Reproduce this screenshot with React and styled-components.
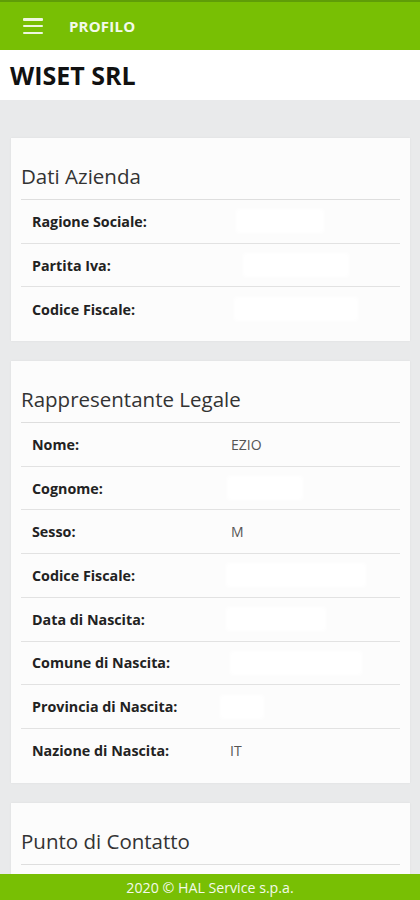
import React from "react";
import styled, { createGlobalStyle } from "styled-components";

const Global = createGlobalStyle`
  html, body { margin: 0; padding: 0; }
  body {
    background: #e9eaeb;
    font-family: "Open Sans", "Noto Sans", Arial, sans-serif;
    color: #222;
  }
`;

const Page = styled.div`
  height: 900px;
  overflow: hidden;
  background: #e9eaeb;
`;

const TopBar = styled.header`
  height: 50px;
  background: #78bf04;
  border-top: 2px solid #5f9d08;
  box-sizing: border-box;
  display: flex;
  align-items: center;
  padding-left: 23px;
  gap: 26px;
`;

const Burger = styled.button`
  border: 0;
  background: none;
  padding: 0;
  width: 20px;
  height: 16px;
  display: flex;
  flex-direction: column;
  justify-content: space-between;
  span {
    display: block;
    height: 2.5px;
    background: #eef7e0;
    border-radius: 1px;
  }
`;

const BarTitle = styled.h1`
  margin: 0;
  font-size: 15px;
  font-weight: 700;
  color: #f3faea;
  letter-spacing: 0.2px;
`;

const CompanyBand = styled.div`
  height: 50px;
  background: #fff;
  display: flex;
  align-items: center;
  padding-left: 10px;
  font-size: 25px;
  font-weight: 700;
  color: #111;
  margin-bottom: 38px;
`;

const Cards = styled.div`
  display: flex;
  flex-direction: column;
  gap: 20px;
  padding: 0 10px 0 11px;
`;

const Card = styled.section`
  background: #fcfcfc;
  box-shadow: 0 0 2px rgba(0, 0, 0, 0.06);
  padding: 19px 10px ${(p) => (p.$tail ? 40 : 10)}px;
`;

const CardTitle = styled.h2`
  margin: 0;
  line-height: 38px;
  padding-bottom: 4px;
  font-size: 20.5px;
  font-weight: 400;
  color: #333;
  border-bottom: 1px solid #dedede;
`;

const Row = styled.div`
  display: grid;
  grid-template-columns: 210px 1fr;
  align-items: center;
  height: 43.7px;
  box-sizing: border-box;
  border-bottom: 1px solid #e2e2e2;
  &:last-child { border-bottom: 0; }
`;

const Label = styled.span`
  padding-left: 11px;
  font-size: 14.3px;
  font-weight: 700;
  color: #222;
`;

const Value = styled.span`
  font-size: 14px;
  color: #555;
  margin-left: ${(p) => p.$off || 0}px;
`;

const Redacted = styled.span`
  display: block;
  height: 20px;
  width: ${(p) => p.$w}px;
  margin-left: ${(p) => p.$off || 0}px;
  background: #fff;
  box-shadow: 0 0 4px 2px #fff;
`;

const Footer = styled.footer`
  position: fixed;
  left: 0;
  right: 0;
  bottom: 0;
  height: 26px;
  background: #78bf04;
  color: #f3faea;
  font-size: 14.2px;
  display: flex;
  align-items: center;
  justify-content: center;
`;

const azienda = [
  { l: "Ragione Sociale:", w: 84, off: 7 },
  { l: "Partita Iva:", w: 102, off: 14 },
  { l: "Codice Fiscale:", w: 120, off: 5 },
];

const legale = [
  { l: "Nome:", v: "EZIO" },
  { l: "Cognome:", w: 72, off: -2 },
  { l: "Sesso:", v: "M" },
  { l: "Codice Fiscale:", w: 136, off: -3 },
  { l: "Data di Nascita:", w: 96, off: -3 },
  { l: "Comune di Nascita:", w: 128, off: 1 },
  { l: "Provincia di Nascita:", w: 40, off: -9 },
  { l: "Nazione di Nascita:", v: "IT", off: -1 },
];

function Rows({ items }) {
  return items.map((r) => (
    <Row key={r.l}>
      <Label>{r.l}</Label>
      {r.v ? <Value $off={r.off}>{r.v}</Value> : <Redacted $w={r.w} $off={r.off} />}
    </Row>
  ));
}

export default function App() {
  return (
    <Page>
      <Global />
      <TopBar>
        <Burger aria-label="menu">
          <span />
          <span />
          <span />
        </Burger>
        <BarTitle>PROFILO</BarTitle>
      </TopBar>
      <CompanyBand>WISET SRL</CompanyBand>
      <Cards>
        <Card>
          <CardTitle>Dati Azienda</CardTitle>
          <Rows items={azienda} />
        </Card>
        <Card>
          <CardTitle>Rappresentante Legale</CardTitle>
          <Rows items={legale} />
        </Card>
        <Card $tail>
          <CardTitle>Punto di Contatto</CardTitle>
        </Card>
      </Cards>
      <Footer>2020 © HAL Service s.p.a.</Footer>
    </Page>
  );
}
